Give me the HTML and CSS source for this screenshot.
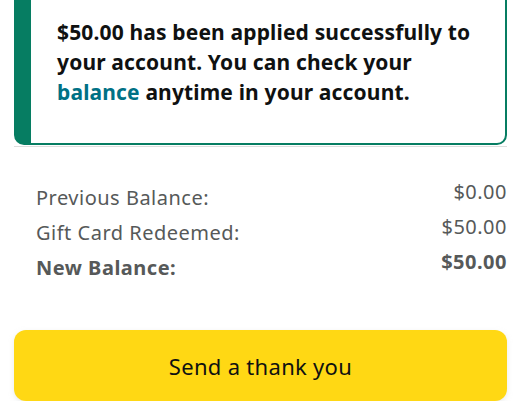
FILE: index.html
```html
<!DOCTYPE html>
<html lang="en">
<head>
  <meta charset="UTF-8">
  <meta name="viewport" content="width=device-width, initial-scale=1.0">
  <title>Gift Card Redeemed</title>
  <link rel="stylesheet" href="styles.css">
</head>
<body>

  <div class="alert">
    <p>$50.00 has been applied successfully to your account. You can check your <a href="#">balance</a> anytime in your account.</p>
  </div>
  <div class="divider"></div>

  <div class="summary">
    <div class="row">
      <span class="label">Previous Balance:</span>
      <span class="value">$0.00</span>
    </div>
    <div class="row">
      <span class="label">Gift Card Redeemed:</span>
      <span class="value">$50.00</span>
    </div>
    <div class="row total">
      <span class="label">New Balance:</span>
      <span class="value">$50.00</span>
    </div>
  </div>

  <div class="actions">
    <button class="btn-primary">Send a thank you</button>
  </div>

</body>
</html>
```

FILE: styles.css
```css
body {
  font-family: "Noto Sans", Arial, sans-serif;
  background-color: #fff;
  color: #0f1111;
  margin: 0;
  padding: 0;
}
.alert {
  margin: -10px 14px 0 14px;
  border: 2px solid #067d62;
  border-left: 17px solid #067d62;
  border-radius: 10px;
  padding: 25px 28px 36px 26px;
}
.alert p {
  margin: 0;
  font-size: 21px;
  font-weight: bold;
  line-height: 30px;
  letter-spacing: 0.15px;
}
.alert a {
  color: #007185;
  text-decoration: none;
}
.divider {
  height: 1px;
  background-color: #ddd;
  margin: 1px 14px 0 14px;
}
.summary {
  padding: 31px 14px 0 36px;
}
.row {
  display: flex;
  justify-content: space-between;
  align-items: flex-start;
  color: #565959;
  font-size: 20px;
  letter-spacing: 0.5px;
  line-height: 28px;
  height: 35px;
}
.row .label {
  padding-top: 6px;
}
.row.total {
  font-weight: bold;
}
.actions {
  padding: 47px 14px 0 14px;
}
.btn-primary {
  width: 100%;
  height: 71px;
  background-color: #ffd814;
  border: none;
  border-radius: 12px;
  box-shadow: 0 2px 5px rgba(213, 217, 217, 0.5);
  font-family: "Noto Sans", Arial, sans-serif;
  font-size: 22px;
  letter-spacing: 0.3px;
  color: #0f1111;
}
```
